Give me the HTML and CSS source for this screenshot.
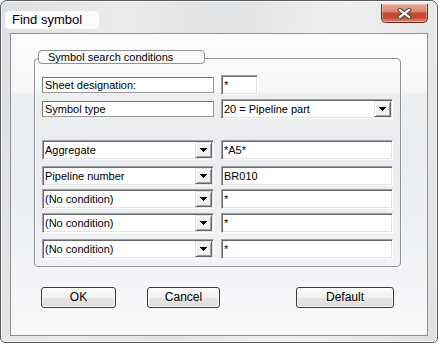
FILE: index.html
```html
<!DOCTYPE html>
<html>
<head>
<meta charset="utf-8">
<title>Find symbol</title>
<link rel="stylesheet" href="styles.css">
</head>
<body>
<div class="window">
  <div class="titlebar">
    <div class="title">Find symbol</div>
    <div class="close">
      <svg width="15" height="11" viewBox="0 0 15 11">
        <path d="M3 2L12 9M12 2L3 9" stroke="#4a4a4a" stroke-width="4.2" stroke-linecap="square" fill="none"/>
        <path d="M3 2L12 9M12 2L3 9" stroke="#ffffff" stroke-width="2.2" stroke-linecap="square" fill="none"/>
      </svg>
    </div>
  </div>
  <div class="panel">
    <div class="group">
      <div class="legend">Symbol search conditions</div>
      <div class="row">
        <div class="label">Sheet designation:</div>
        <div class="field short"><span class="val">*</span></div>
      </div>
      <div class="row r2">
        <div class="label">Symbol type</div>
        <div class="field combo"><span class="val">20 = Pipeline part</span><span class="drop"><svg width="7" height="4" viewBox="0 0 7 4"><path d="M0 0h7v1H0zM1 1h5v1H1zM2 2h3v1H2zM3 3h1v1H3z"/></svg></span></div>
      </div>
      <div class="row r3">
        <div class="field combo"><span class="val">Aggregate</span><span class="drop"><svg width="7" height="4" viewBox="0 0 7 4"><path d="M0 0h7v1H0zM1 1h5v1H1zM2 2h3v1H2zM3 3h1v1H3z"/></svg></span></div>
        <div class="field"><span class="val">*A5*</span></div>
      </div>
      <div class="row r4">
        <div class="field combo"><span class="val">Pipeline number</span><span class="drop"><svg width="7" height="4" viewBox="0 0 7 4"><path d="M0 0h7v1H0zM1 1h5v1H1zM2 2h3v1H2zM3 3h1v1H3z"/></svg></span></div>
        <div class="field"><span class="val">BR010</span></div>
      </div>
      <div class="row r5">
        <div class="field combo"><span class="val">(No condition)</span><span class="drop"><svg width="7" height="4" viewBox="0 0 7 4"><path d="M0 0h7v1H0zM1 1h5v1H1zM2 2h3v1H2zM3 3h1v1H3z"/></svg></span></div>
        <div class="field"><span class="val">*</span></div>
      </div>
      <div class="row r6">
        <div class="field combo"><span class="val">(No condition)</span><span class="drop"><svg width="7" height="4" viewBox="0 0 7 4"><path d="M0 0h7v1H0zM1 1h5v1H1zM2 2h3v1H2zM3 3h1v1H3z"/></svg></span></div>
        <div class="field"><span class="val">*</span></div>
      </div>
      <div class="row r7">
        <div class="field combo"><span class="val">(No condition)</span><span class="drop"><svg width="7" height="4" viewBox="0 0 7 4"><path d="M0 0h7v1H0zM1 1h5v1H1zM2 2h3v1H2zM3 3h1v1H3z"/></svg></span></div>
        <div class="field"><span class="val">*</span></div>
      </div>
    </div>
    <div class="buttons">
      <div class="btn ok">OK</div>
      <div class="btn cancel">Cancel</div>
      <div class="btn default">Default</div>
    </div>
  </div>
</div>
</body>
</html>
```
FILE: styles.css
```css
html, body {
  margin: 0;
  background: #ffffff;
}
body {
  font-family: "Liberation Sans", Arial, sans-serif;
  color: #000;
}
.window {
  width: 438px;
  height: 343px;
  box-sizing: border-box;
  border: 1px solid #585c61;
  border-radius: 7px 7px 5px 5px;
  padding: 0 9px 6px;
  display: flex;
  flex-direction: column;
  background: linear-gradient(100deg, #dedfe0 0%, #ebebeb 25%, #e2e3e4 45%, #efefef 70%, #e0e1e2 100%);
  box-shadow: inset 1px 1px 0 #f6f6f6, inset -1px -1px 0 #f6f6f6;
}
.titlebar {
  height: 32px;
  display: flex;
  align-items: flex-start;
}
.title {
  margin: 10px 0 0 -5px;
  height: 18px;
  padding: 0 17px 0 7px;
  background: rgba(255, 255, 255, 0.88);
  border-radius: 4px;
  font-size: 13px;
  line-height: 18px;
}
.close {
  margin: 3px 0 0 auto;
  width: 47px;
  height: 19px;
  box-sizing: border-box;
  border: 1px solid #6a2a22;
  border-top: none;
  border-radius: 0 0 5px 5px;
  background: linear-gradient(#e8a596 0%, #dc8a77 40%, #c6472f 52%, #c8492f 75%, #dc8d79 100%);
  box-shadow: inset 0 0 0 1px rgba(255, 255, 255, 0.35);
  display: flex;
  align-items: center;
  justify-content: center;
}
.close svg {
  display: block;
}
.panel {
  flex: 1;
  border: 1px solid #8e9094;
  background: linear-gradient(to bottom, #fcfcfc 0px, #f7f7f8 57px, #eceef0 61px, #eaecef 120px, #f1f2f4 220px, #f9f9fa 301px);
  display: flex;
  flex-direction: column;
}
.group {
  position: relative;
  margin: 24px 0 0 23px;
  width: 367px;
  box-sizing: border-box;
  border: 1px solid #8f9296;
  border-radius: 4px;
  padding: 16px 7px 7px;
  box-shadow: inset 1px 1px 0 #ffffff, 1px 1px 0 #ffffff;
}
.legend {
  position: absolute;
  left: 3px;
  top: -9px;
  width: 167px;
  height: 14px;
  box-sizing: border-box;
  border: 1px solid #8f9296;
  border-radius: 4px;
  background: #fafafa;
  padding-left: 9px;
  font-size: 11px;
  line-height: 12px;
}
.row {
  display: flex;
  align-items: center;
  gap: 7px;
  height: 20px;
}
.r2 { margin-top: 4px; }
.r3 { margin-top: 21px; }
.r4 { margin-top: 6px; }
.r5 { margin-top: 3px; }
.r6 { margin-top: 4px; }
.r7 { margin-top: 6px; }
.label {
  width: 172px;
  height: 16px;
  box-sizing: border-box;
  border: 1px solid #777777;
  border-right-color: #9a9a9a;
  border-bottom-color: #9a9a9a;
  background: #ffffff;
  padding-left: 2px;
  font-size: 11px;
  line-height: 14px;
}
.field {
  width: 172px;
  height: 20px;
  box-sizing: border-box;
  border: 1px solid;
  border-color: #a0a0a0 #ffffff #ffffff #a0a0a0;
  box-shadow: inset 1px 1px 0 #696969, inset -1px -1px 0 #e3e3e3;
  background: #ffffff;
  padding-left: 2px;
  display: flex;
  align-items: center;
  font-size: 11px;
}
.field.short {
  width: 37px;
}
.val {
  flex: 1;
  line-height: 14px;
  white-space: nowrap;
}
.drop {
  width: 17px;
  height: 16px;
  margin-right: 1px;
  box-sizing: border-box;
  border: 1px solid;
  border-color: #e3e3e3 #696969 #696969 #e3e3e3;
  box-shadow: inset 1px 1px 0 #ffffff, inset -1px -1px 0 #a0a0a0;
  background: #f0f0f0;
  display: flex;
  align-items: center;
  justify-content: center;
}
.drop svg {
  display: block;
}
.buttons {
  display: flex;
  margin: 20px 0 0 30px;
}
.btn {
  height: 21px;
  box-sizing: border-box;
  border: 1px solid #3a3a3a;
  border-radius: 3px;
  background: linear-gradient(#fbfbfb 0%, #f1f1f1 50%, #e6e6e6 52%, #dcdcdc 100%);
  box-shadow: inset 0 0 0 1px rgba(255, 255, 255, 0.8);
  font-size: 12px;
  line-height: 19px;
  text-align: center;
}
.ok { width: 75px; }
.cancel { width: 73px; margin-left: 31px; }
.default { width: 98px; margin-left: 76px; }
```
